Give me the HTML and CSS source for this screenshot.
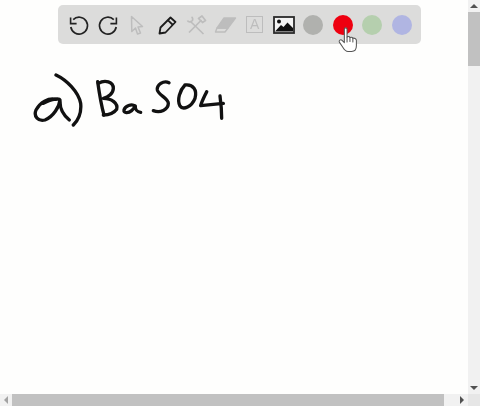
FILE: index.html
```html
<!DOCTYPE html>
<html lang="en">

<head>
  <meta charset="UTF-8">
  <meta name="viewport" content="width=device-width, initial-scale=1.0">
  <title>Whiteboard</title>
  <link rel="stylesheet" href="styles.css">
</head>

<body>
  <div class="board">
    <div class="canvas">
      <div class="toolbar">
        <!-- undo -->
        <div class="tool">
          <svg width="24" height="24" viewBox="0 0 24 24" fill="none" stroke="#222" stroke-width="1.7">
            <path d="M6.2 6.6A8.4 8.4 0 1 1 3.8 14" />
            <path d="M3.6 4.4V10.6H9.6" stroke-width="1.6" />
          </svg>
        </div>
        <!-- redo -->
        <div class="tool">
          <svg width="24" height="24" viewBox="0 0 24 24" fill="none" stroke="#222" stroke-width="1.7">
            <path d="M17.8 6.6A8.4 8.4 0 1 0 20.2 14" />
            <path d="M20.4 4.4V10.6H14.4" stroke-width="1.6" />
          </svg>
        </div>
        <!-- pointer -->
        <div class="tool">
          <svg width="24" height="24" viewBox="0 0 24 24" fill="none" stroke="#bdbdbd" stroke-width="1.5" stroke-linejoin="round">
            <path d="M6.5 3.5L17.5 13.5L13 14L15.5 20L12.5 21L10.5 15L6.8 18.5Z" />
          </svg>
        </div>
        <!-- pencil -->
        <div class="tool">
          <svg width="24" height="24" viewBox="0 0 24 24" fill="none" stroke="#1c1c1c" stroke-width="1.8" stroke-linejoin="round">
            <path d="M15.5 4.5L20.5 9L10.5 19.5L4.5 20.5L5.5 14.5Z" />
            <path d="M12.8 7.2L18 12" />
          </svg>
        </div>
        <!-- tools -->
        <div class="tool">
          <svg width="24" height="24" viewBox="0 0 24 24" fill="none" stroke="#bdbdbd" stroke-width="1.7" stroke-linejoin="round">
            <path d="M6 8L19.5 21" />
            <path d="M3.5 7.5C4 9 6.5 9.5 8 8C9.5 6.5 8.5 4.5 7.5 4" />
            <path d="M17.5 7L5 19.5" />
            <path d="M14.5 5.5L18 3L21.5 7.5L18.5 9.5Z" />
          </svg>
        </div>
        <!-- eraser -->
        <div class="tool">
          <svg width="24" height="24" viewBox="0 0 24 24" fill="none" stroke="#bdbdbd" stroke-width="1.4" stroke-linejoin="round">
            <path d="M11 5H22.5L15 15H4Z" fill="#bdbdbd" />
            <path d="M4 15H15L12 19H2.5Z" />
          </svg>
        </div>
        <!-- text box -->
        <div class="tool">
          <div class="text-tool">A</div>
        </div>
        <!-- image -->
        <div class="tool">
          <svg width="22" height="18" viewBox="0 0 22 18">
            <rect x="1" y="1" width="20" height="16" fill="#f4f4f4" stroke="#2a2a2a" stroke-width="1.8" />
            <circle cx="6" cy="5.6" r="2" fill="#111" />
            <path d="M2 15.5L8 9L10.5 11L14.5 6.5L20 12V15.5Z" fill="#111" />
          </svg>
        </div>
        <div class="tool"><span class="dot dot-grey"></span></div>
        <div class="tool tool-active">
          <span class="dot dot-red"></span>
          <svg class="hand" width="23" height="27" viewBox="0 0 22 26" stroke="#555" stroke-width="1" stroke-linejoin="round" stroke-linecap="round">
            <path fill="#fff" d="M7 3C7 1.4 9.6 1.4 9.6 3V10.5C10.8 10 12 10.2 12.4 11C13.6 10.6 14.8 10.8 15.2 11.8C16.4 11.5 18.6 11.8 18.6 14V19C18.6 22 17 24.5 14 24.5H10.5C8 24.5 7 23 5.5 20.5L2.2 15.5C1.4 14 3.4 12.6 4.8 13.8L7 16Z" />
            <path fill="none" d="M12.4 11V15M15.2 11.8V15.5M9.6 10.5V15.5" />
          </svg>
        </div>
        <div class="tool"><span class="dot dot-green"></span></div>
        <div class="tool"><span class="dot dot-blue"></span></div>
      </div>

      <!-- handwritten strokes, same scale as a 3x crop -->
      <svg class="ink" width="220" height="65" viewBox="0 0 660 195" fill="none" stroke="#111" stroke-width="10" stroke-linecap="round" stroke-linejoin="round">
        <path d="M108 88C85 82 60 98 48 120C40 140 55 155 75 150C100 140 118 110 120 90C118 85 100 84 70 100" />
        <path d="M120 96C120 118 130 135 148 150" />
        <path d="M108 15C140 30 175 65 182 100C185 130 175 150 160 165" />
        <path d="M233 35C238 70 245 110 252 135" />
        <path d="M235 40C255 28 280 35 280 55C280 70 265 82 250 85C275 85 295 100 290 118C280 132 265 135 250 135" />
        <path d="M345 108C335 100 315 108 312 120C310 130 325 130 335 122C342 115 345 110 346 108C345 118 352 126 362 127" />
        <path d="M447 38C430 30 410 45 412 60C415 75 445 85 445 100C445 120 420 130 400 122" />
        <path d="M495 45C480 60 470 90 480 108C490 122 515 110 525 85C532 60 520 42 495 45" />
        <path d="M560 65C552 82 545 95 542 107L610 100" />
        <path d="M600 78C603 100 605 125 605 145" />
      </svg>
    </div>

    <div class="scroll-v">
      <div class="scroll-btn"><span class="arrow arrow-up"></span></div>
      <div class="thumb thumb-v"></div>
      <div class="spacer"></div>
      <div class="scroll-btn"><span class="arrow arrow-down"></span></div>
    </div>

    <div class="scroll-h">
      <div class="scroll-btn"><span class="arrow arrow-left"></span></div>
      <div class="thumb thumb-h"></div>
      <div class="spacer"></div>
      <div class="scroll-btn"><span class="arrow arrow-right"></span></div>
    </div>

    <div class="corner"></div>
  </div>
</body>

</html>
```

FILE: styles.css
```css
body {
  margin: 0;
  padding: 0;
  font-family: "Liberation Sans", Arial, sans-serif;
  background-color: #fefefd;
  overflow: hidden;
}

.board {
  display: grid;
  grid-template-columns: 468px 12px;
  grid-template-rows: 394px 12px;
  width: 480px;
  height: 406px;
}

.canvas {
  overflow: hidden;
}

.toolbar {
  display: grid;
  grid-template-columns: repeat(12, 1fr);
  align-items: center;
  box-sizing: border-box;
  width: 363px;
  height: 39px;
  margin: 5px 0 0 58px;
  padding: 0 4.8px 0 6px;
  border-radius: 5px;
  background-color: #dcdcdb;
}

.tool {
  display: flex;
  justify-content: center;
  align-items: center;
  height: 39px;
}

.tool svg,
.text-tool {
  filter: blur(0.25px);
}

.tool-active {
  position: relative;
}

.text-tool {
  box-sizing: border-box;
  width: 17px;
  height: 17px;
  border: 1.5px solid #bdbdbd;
  color: #bdbdbd;
  font-size: 14px;
  line-height: 14px;
  text-align: center;
}

.dot {
  display: block;
  width: 20px;
  height: 20px;
  border-radius: 50%;
}

.dot-grey {
  background-color: #b0b1ae;
}

.dot-red {
  background-color: #ee0010;
}

.dot-green {
  background-color: #b5cfae;
}

.dot-blue {
  background-color: #b0b5e2;
}

.tool .hand {
  position: absolute;
  left: 9px;
  top: 21px;
}

.ink {
  display: block;
  margin: 26px 0 0 20px;
  filter: blur(0.3px);
}

.scroll-v,
.scroll-h {
  display: flex;
  background-color: #f1f1f1;
}

.scroll-v {
  flex-direction: column;
}

.scroll-btn {
  display: flex;
  justify-content: center;
  align-items: center;
  flex: none;
  width: 12px;
  height: 12px;
}

.spacer {
  flex: 1;
}

.thumb {
  background-color: #c1c1c1;
}

.thumb-v {
  height: 54px;
}

.thumb-h {
  width: 432px;
}

.corner {
  background-color: #e6e6e6;
}

.arrow {
  width: 0;
  height: 0;
  border: 4px solid transparent;
}

.arrow-up {
  border-top: 0;
  border-bottom-color: #505050;
}

.arrow-down {
  border-bottom: 0;
  border-top-color: #505050;
}

.arrow-left {
  border-left: 0;
  border-right-color: #a3a3a3;
}

.arrow-right {
  border-right: 0;
  border-left-color: #505050;
}
```
